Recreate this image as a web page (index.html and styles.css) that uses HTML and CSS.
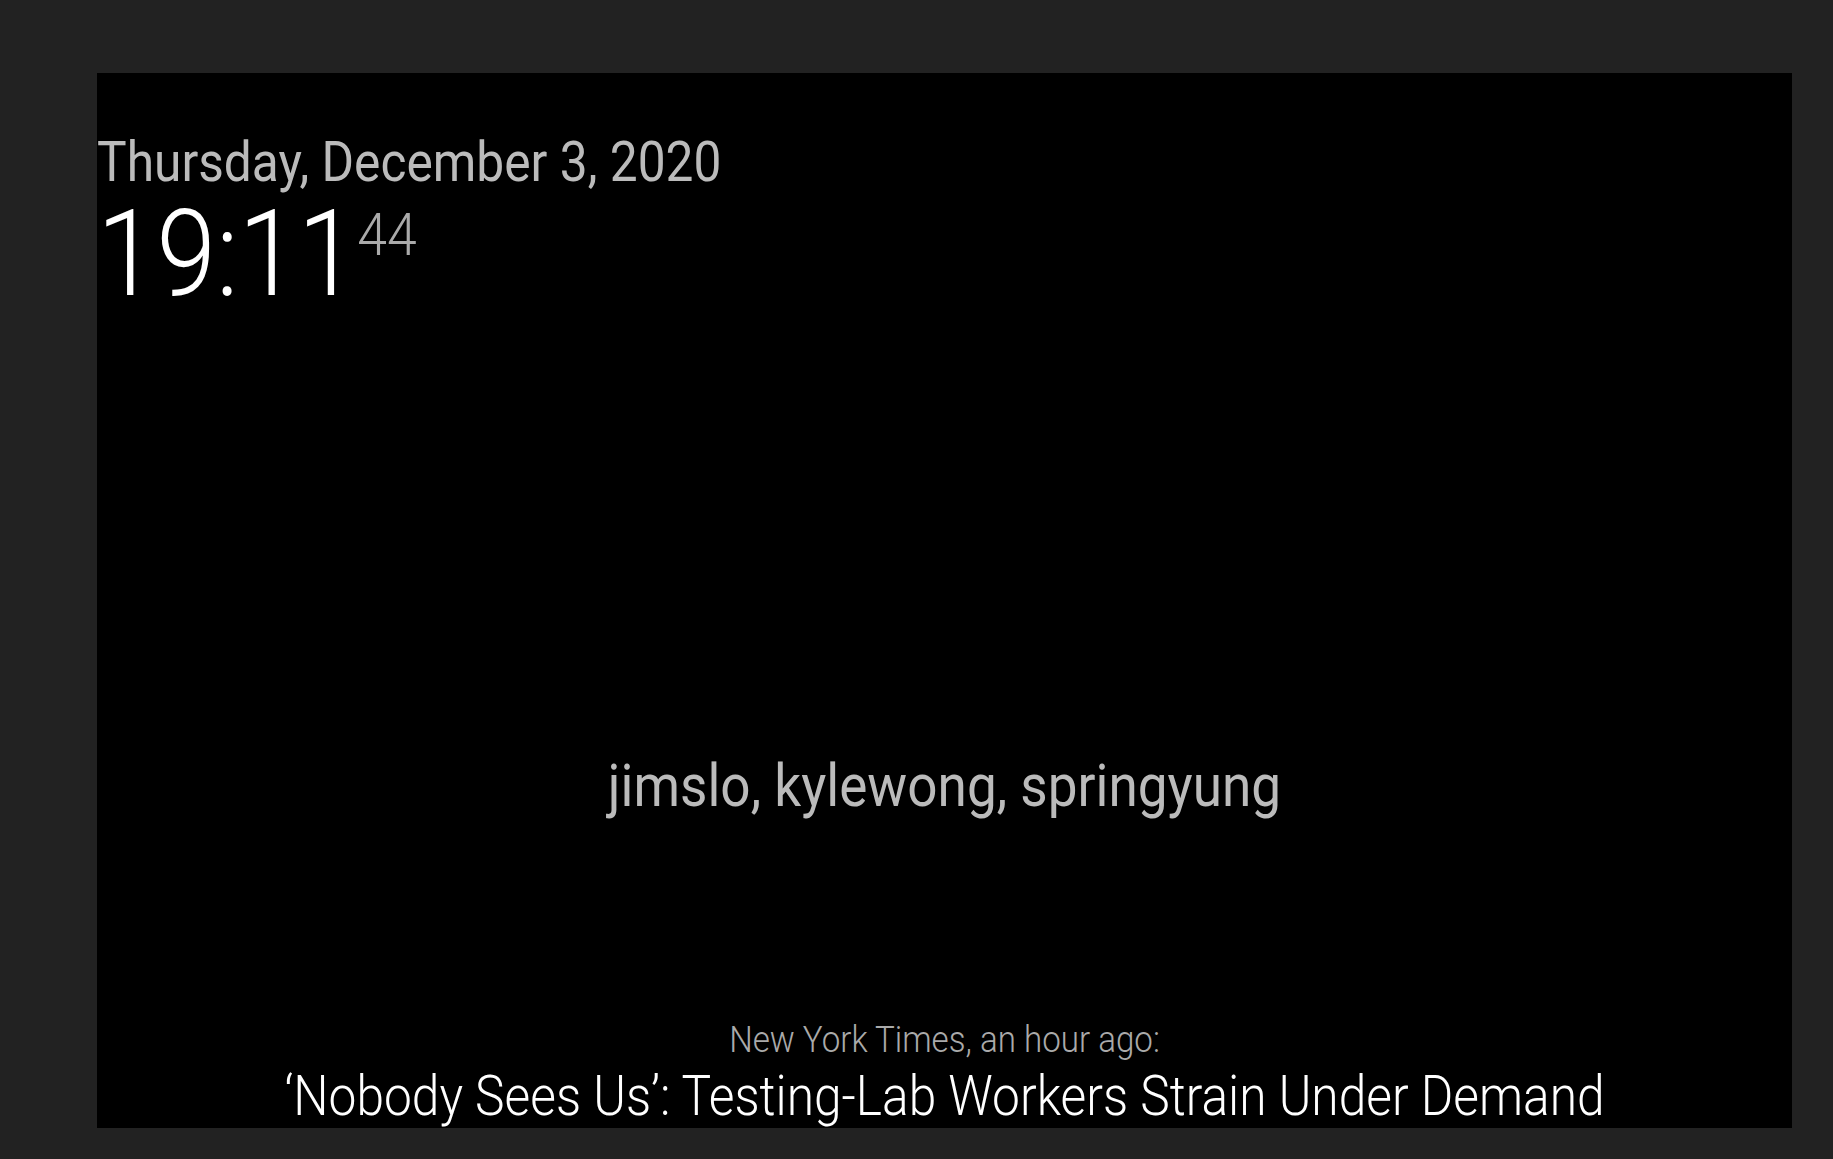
FILE: index.html
```html
<!DOCTYPE html>
<html lang="en">
<head>
<meta charset="utf-8">
<title>MagicMirror</title>
<link rel="stylesheet" href="styles.css">
</head>
<body>
<div class="mirror">
  <div class="clock">
    <div class="date">Thursday, December 3, 2020</div>
    <div class="time"><span class="hm">19:11</span><span class="sec">44</span></div>
  </div>
  <div class="compliments">jimslo, kylewong, springyung</div>
  <div class="news">
    <div class="source">New York Times, an hour ago:</div>
    <div class="headline">‘Nobody Sees Us’: Testing-Lab Workers Strain Under Demand</div>
  </div>
</div>
</body>
</html>
```
FILE: styles.css
```css
html, body {
  margin: 0;
  padding: 0;
  background: #222;
}
body {
  font-family: Roboto, "Noto Sans", sans-serif;
  overflow: hidden;
}
.mirror {
  margin: 73px 0 0 97px;
  width: 1695px;
  height: 1055px;
  background: #000;
  overflow: hidden;
  display: flex;
  flex-direction: column;
}
.clock {
  margin-top: 57px;
}
.date {
  font-size: 56px;
  line-height: 64px;
  color: #bbb;
  font-weight: 400;
  white-space: nowrap;
  transform: scaleX(0.887);
  transform-origin: left center;
}
.time {
  font-size: 120px;
  line-height: 120px;
  height: 120px;
  color: #fff;
  font-weight: 300;
  white-space: nowrap;
  transform: scaleX(0.893);
  transform-origin: left center;
}
.sec {
  font-size: 60px;
  line-height: 0;
  vertical-align: 40px;
  color: #aaa;
  margin-left: 0;
}
.compliments {
  margin-top: 436px;
  font-size: 60px;
  line-height: 72px;
  color: #bbb;
  text-align: center;
  white-space: nowrap;
  transform: scaleX(0.885);
}
.news {
  margin-top: 196px;
  text-align: center;
  white-space: nowrap;
}
.source {
  font-size: 36px;
  line-height: 44px;
  color: #aaa;
  font-weight: 300;
  transform: scaleX(0.92);
}
.headline {
  margin-top: 4px;
  font-size: 56px;
  line-height: 60px;
  color: #fff;
  font-weight: 300;
  transform: scaleX(0.887);
}
```
